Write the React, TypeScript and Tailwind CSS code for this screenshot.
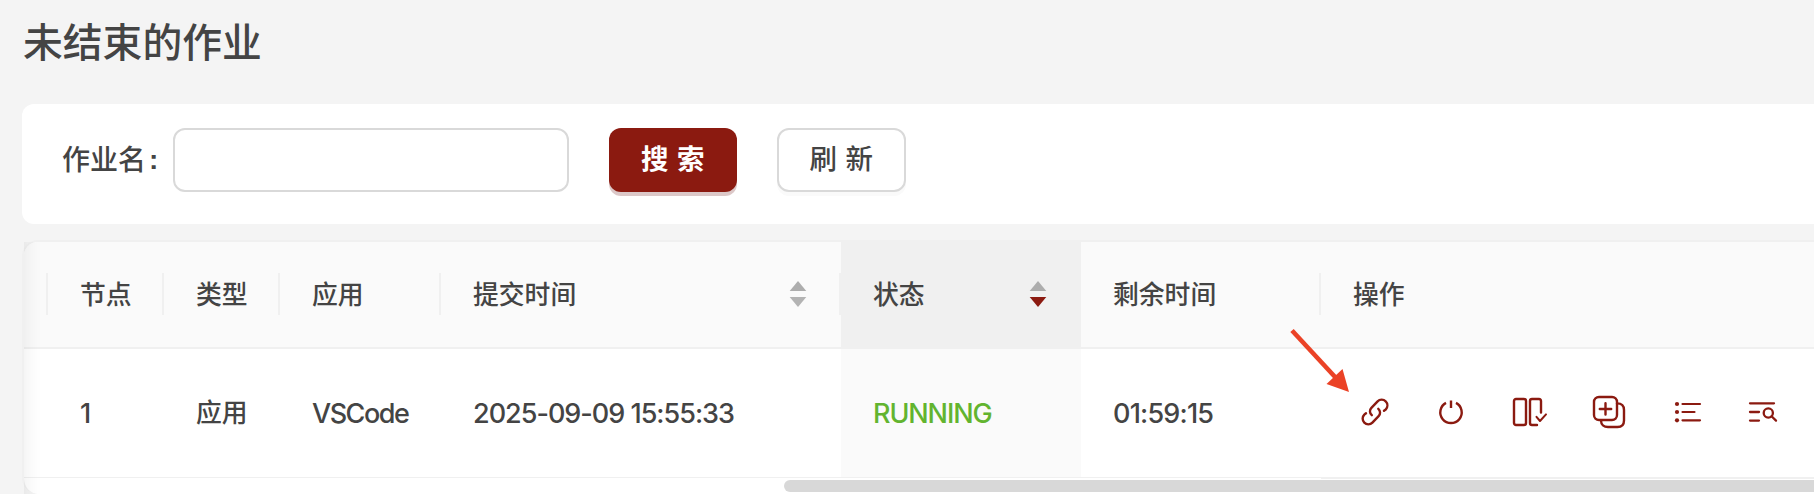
import React from "react";

const stroke = { fill: "none", stroke: "#8b1a10", strokeLinecap: "round" as const, strokeLinejoin: "round" as const };

function Sorter({ active = false }: { active?: boolean }) {
  return (
    <svg width="18" height="28" viewBox="0 0 18 28" className="mt-0.5 shrink-0">
      <path d="M9 1L17.3 11H0.7Z" fill="#adadad" />
      <path d="M9 27L17.3 17H0.7Z" fill={active ? "#8b1a10" : "#b3b3b3"} />
    </svg>
  );
}

function Divider() {
  return <span className="mt-0.5 h-[42px] w-0.5 shrink-0 bg-[#f0f0f0]" />;
}

function Cell({ children, className = "" }: { children: React.ReactNode; className?: string }) {
  return <div className={`flex h-full shrink-0 items-center pl-8 ${className}`}>{children}</div>;
}

function LinkIcon() {
  return (
    <svg width="28" height="28" viewBox="0 0 28 28" {...stroke} strokeWidth="2.4">
      <path d="M10.8 17.2C8.4 15.1 8.4 11.8 10.4 9.8L16.6 3.4A5.6 5.6 0 0 1 24.7 3.4C26.9 5.6 26.9 9.2 24.7 11.6L23 12.8" />
      <path d="M17.3 10.8C19.6 12.9 19.6 16.2 17.6 18.2L11.4 24.6A5.6 5.6 0 0 1 3.3 24.6C1.1 22.4 1.1 18.8 3.3 16.6L5 15.2" />
    </svg>
  );
}

function PowerIcon() {
  return (
    <svg width="28" height="28" viewBox="0 0 28 28" {...stroke} strokeWidth="2.4" strokeLinecap="butt">
      <path d="M9 4.9A10.7 10.7 0 1 0 19 4.9M14 2.4V10" />
    </svg>
  );
}

function PanelsIcon() {
  return (
    <svg width="36" height="30" viewBox="0 0 36 30" {...stroke} strokeWidth="2.4">
      <rect x="2" y="2" width="12" height="26" rx="2" />
      <path d="M29 15.5V4Q29 2 27 2H20Q18 2 18 4V26Q18 28 20 28H25" />
      <path d="M24.5 19.8L28 24L34 17.4" strokeWidth="2" />
    </svg>
  );
}

function CopyIcon() {
  return (
    <svg width="34" height="34" viewBox="0 0 34 34" {...stroke} strokeWidth="2.4">
      <rect x="2" y="2" width="23" height="23" rx="5" />
      <path d="M25 8.4C29.5 8.4 32 11 32 15V25.5C32 29.5 29.5 32 25.5 32H16C12 32 9 29.5 9 25.5M13.5 8.3V19.6M7.8 14H19.2" />
    </svg>
  );
}

function ListIcon() {
  return (
    <svg width="28" height="22" viewBox="0 0 28 22" {...stroke} strokeWidth="2.2">
      <path d="M8.5 3H26M8.5 11H20.5M8.5 19.3H26" />
      <g fill="#8b1a10" stroke="none">
        <circle cx="3" cy="3" r="2.1" />
        <circle cx="3" cy="11" r="2.1" />
        <circle cx="3" cy="19.3" r="2.1" />
      </g>
    </svg>
  );
}

function SearchListIcon() {
  return (
    <svg width="30" height="22" viewBox="0 0 30 22" {...stroke} strokeWidth="2.3">
      <path d="M2 2.3H26M2 11H11M2 19.6H11" />
      <circle cx="20.3" cy="12" r="4.6" />
      <path d="M23.6 15.3L28 19.6" />
    </svg>
  );
}

export default function App() {
  return (
    <div className="relative h-[494px] w-[1814px] overflow-hidden bg-[#f4f4f4] pt-[11px] font-['Noto_Sans_CJK_SC',sans-serif] font-medium text-[#444]">
      <h1 className="pl-[23px] text-[39.8px] leading-[58px]">未结束的作业</h1>

      <form className="mt-[35px] ml-[22px] flex h-[120px] items-start rounded-l-xl bg-white pt-6 pl-10" onSubmit={(e) => e.preventDefault()}>
        <label htmlFor="job" className="flex h-[60px] w-[111px] items-center text-[28px]">
          <span>作业名</span>
          <span className="ml-[3px] pt-1 font-['Liberation_Sans',sans-serif] font-bold">:</span>
        </label>
        <input id="job" className="h-16 w-[396px] rounded-xl border-2 border-[#d9d9d9] bg-white outline-none" />
        <button className="ml-10 h-16 w-32 rounded-xl bg-[#8b1a10] pb-[4px] pl-2 text-[27.5px] font-bold tracking-[8.5px] text-white shadow-[0_4px_0_#dcc8c8]">搜索</button>
        <button className="ml-10 h-16 w-[129px] rounded-xl border-2 border-[#d9d9d9] bg-white pb-[4px] pl-2 text-[27.5px] tracking-[8.5px] shadow-[0_4px_0_#fafafa]">刷新</button>
      </form>

      <div className="relative mt-4 ml-[22px] h-[254px]">
        <div className="h-full overflow-hidden rounded-l-2xl border-t-2 border-l-2 border-[#f0f0f0] bg-white">
          <div className="flex h-[107px] items-center border-b-2 border-[#f0f0f0] bg-[#fafafa] pb-[3px] text-[25.8px]">
            <div className="flex w-6 shrink-0 justify-end"><Divider /></div>
            <Cell className="w-[116px] justify-between">节点<Divider /></Cell>
            <Cell className="w-[116px] justify-between">类型<Divider /></Cell>
            <Cell className="w-[161px] justify-between">应用<Divider /></Cell>
            <Cell className="w-[400px]">
              <span className="flex-1">提交时间</span>
              <span className="mr-8 flex"><Sorter /></span>
              <Divider />
            </Cell>
            <div className="flex h-[107px] w-60 shrink-0 items-center self-start bg-[#f0f0f0] pr-[34px] pb-[5px] pl-8">
              <span className="flex-1">状态</span>
              <Sorter active />
            </div>
            <Cell className="w-60 justify-between">剩余时间<Divider /></Cell>
            <Cell>操作</Cell>
          </div>

          <div className="flex h-[128px] items-center font-['Inter','Noto_Sans_CJK_SC',sans-serif] text-[27px]">
            <div className="w-6 shrink-0" />
            <Cell className="w-[116px] pt-0.5">1</Cell>
            <Cell className="w-[116px] text-[25.8px]">应用</Cell>
            <Cell className="w-[161px] pt-0.5 tracking-[-1.5px]">VSCode</Cell>
            <Cell className="w-[400px] pt-0.5 tracking-[-1px]">2025-09-09 15:55:33</Cell>
            <Cell className="w-60 bg-[#fafafa] pt-0.5 tracking-[-1.1px] text-[#62b42f]">RUNNING</Cell>
            <Cell className="w-60 pt-0.5 tracking-[-0.8px]">01:59:15</Cell>
            <div className="flex flex-1 items-center pb-0.5 pl-[40px]">
              <div className="flex w-[76px]"><LinkIcon /></div>
              <div className="flex w-[75px]"><PowerIcon /></div>
              <div className="flex w-[80px]"><PanelsIcon /></div>
              <div className="flex w-[82px]"><CopyIcon /></div>
              <div className="flex w-[74px]"><ListIcon /></div>
              <SearchListIcon />
            </div>
          </div>
          <div className="flex h-0.5">
            <div className="h-px w-[1297px] bg-[#f0f0f0]" />
            <div className="h-0.5 flex-1 bg-[#f0f0f0]" />
          </div>
          <div className="mt-px ml-[760px] h-3 rounded-l-full bg-[#d8d8d8]" />
        </div>
        <div className="pointer-events-none absolute top-0.5 bottom-0 left-0.5 w-[60px] shadow-[inset_20px_0_16px_-16px_rgba(5,5,5,0.06)]" />
      </div>

      <svg className="absolute top-[325px] left-[1285px]" width="70" height="70" viewBox="0 0 70 70">
        <path d="M7 5.5L51 53" stroke="#eb4226" strokeWidth="4.6" />
        <path d="M64 67L57.5 44L41.5 59Z" fill="#eb4226" />
      </svg>
    </div>
  );
}
